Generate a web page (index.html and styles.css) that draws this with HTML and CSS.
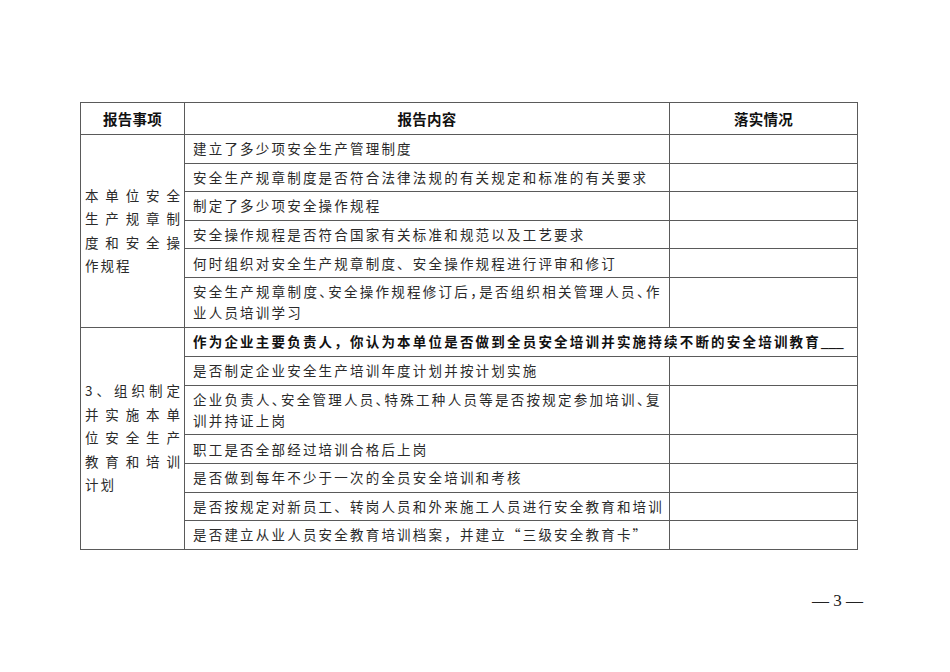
FILE: index.html
```html
<!DOCTYPE html>
<html lang="zh-CN">
<head>
<meta charset="utf-8">
<title>报告事项</title>
<link rel="stylesheet" href="styles.css">
</head>
<body>
<div class="page">
  <table class="report">
    <colgroup>
      <col class="c1">
      <col class="c2">
      <col class="c3">
    </colgroup>
    <thead>
      <tr class="head">
        <th>报告事项</th>
        <th>报告内容</th>
        <th>落实情况</th>
      </tr>
    </thead>
    <tbody>
      <tr>
        <td class="item" rowspan="6">
          <span class="jl">本单位安全</span>
          <span class="jl">生产规章制</span>
          <span class="jl">度和安全操</span>
          <span class="ll">作规程</span>
        </td>
        <td class="txt">建立了多少项安全生产管理制度</td>
        <td></td>
      </tr>
      <tr>
        <td class="txt">安全生产规章制度是否符合法律法规的有关规定和标准的有关要求</td>
        <td></td>
      </tr>
      <tr>
        <td class="txt">制定了多少项安全操作规程</td>
        <td></td>
      </tr>
      <tr>
        <td class="txt">安全操作规程是否符合国家有关标准和规范以及工艺要求</td>
        <td></td>
      </tr>
      <tr>
        <td class="txt">何时组织对安全生产规章制度、安全操作规程进行评审和修订</td>
        <td></td>
      </tr>
      <tr>
        <td class="txt"><span class="jline">安全生产规章制度<span class="p">、</span>安全操作规程修订后<span class="p">，</span>是否组织相关管理人员<span class="p">、</span>作</span><span class="bl">业人员培训学习</span></td>
        <td></td>
      </tr>
      <tr>
        <td class="item" rowspan="7">
          <span class="jl">3、组织制定</span>
          <span class="jl">并实施本单</span>
          <span class="jl">位安全生产</span>
          <span class="jl">教育和培训</span>
          <span class="ll">计划</span>
        </td>
        <td class="bold" colspan="2">作为企业主要负责人，你认为本单位是否做到全员安全培训并实施持续不断的安全培训教育<span class="under">___</span></td>
      </tr>
      <tr>
        <td class="txt">是否制定企业安全生产培训年度计划并按计划实施</td>
        <td></td>
      </tr>
      <tr>
        <td class="txt two"><span class="jline">企业负责人<span class="p">、</span>安全管理人员<span class="p">、</span>特殊工种人员等是否按规定参加培训<span class="p">、</span>复</span><span class="bl">训并持证上岗</span></td>
        <td></td>
      </tr>
      <tr>
        <td class="txt">职工是否全部经过培训合格后上岗</td>
        <td></td>
      </tr>
      <tr>
        <td class="txt">是否做到每年不少于一次的全员安全培训和考核</td>
        <td></td>
      </tr>
      <tr>
        <td class="txt">是否按规定对新员工、转岗人员和外来施工人员进行安全教育和培训</td>
        <td></td>
      </tr>
      <tr>
        <td class="txt">是否建立从业人员安全教育培训档案，并建立“三级安全教育卡”</td>
        <td></td>
      </tr>
    </tbody>
  </table>
  <div class="pageno">— 3 —</div>
</div>
</body>
</html>
```

FILE: styles.css
```css
html, body {
  margin: 0;
  padding: 0;
  background: #ffffff;
}

body {
  width: 950px;
  height: 672px;
  overflow: hidden;
  font-family: "Noto Sans CJK SC", "Noto Sans", sans-serif;
  color: #2a2a2a;
}

.page {
  padding: 102px 0 0 80px;
}

.report {
  border-collapse: collapse;
  table-layout: fixed;
  width: 777px;
}

.c1 { width: 104px; }
.c2 { width: 485px; }
.c3 { width: 188px; }

.report th,
.report td {
  border: 1px solid #5a5a5a;
  padding: 3.3px 8px;
  line-height: 21px;
  font-size: 13.5px;
  vertical-align: middle;
  text-align: left;
}

.head th {
  height: 25px;
  padding: 3px 4px;
  font-size: 14.5px;
  font-weight: 700;
  text-align: center;
  letter-spacing: 0.3px;
  color: #111;
}

.txt {
  letter-spacing: 2.2px;
  white-space: nowrap;
}

.jline {
  display: block;
  letter-spacing: 1.6px;
  text-align: justify;
  text-align-last: justify;
}

.bl {
  display: block;
}

.two {
  line-height: 23px;
}

.p {
  font-feature-settings: "halt";
}

.bold {
  font-size: 15px;
  font-weight: 700;
  letter-spacing: 2.2px;
  white-space: nowrap;
  color: #111;
}

.under {
  letter-spacing: 0;
  font-family: "Liberation Serif", serif;
  font-size: 15px;
}

.report td.item {
  padding: 2px 4px;
  line-height: 23.5px;
}

.jl {
  display: block;
  text-align: justify;
  text-align-last: justify;
}

.ll {
  display: block;
  letter-spacing: 2px;
}

.pageno {
  width: 783px;
  margin-top: 41px;
  text-align: right;
  font-family: "Liberation Serif", serif;
  font-size: 17px;
  line-height: 20px;
  color: #222;
}
```
